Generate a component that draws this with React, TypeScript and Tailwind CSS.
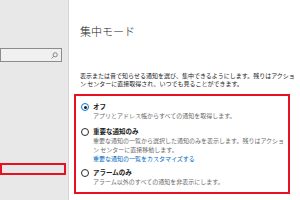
import React from "react";

type Option = {
  id: string;
  title: string;
  lines: string[];
  link?: string;
  selected?: boolean;
  className: string;
};

const OPTIONS: Option[] = [
  {
    id: "off",
    title: "オフ",
    lines: ["アプリとアドレス帳からすべての通知を取得します。"],
    selected: true,
    className: "mt-[6px]",
  },
  {
    id: "priority",
    title: "重要な通知のみ",
    lines: [
      "重要な通知の一覧から選択した通知のみを表示します。残りはアクショ",
      "ン センターに直接移動します。",
    ],
    link: "重要な通知の一覧をカスタマイズする",
    className: "mt-[7px]",
  },
  {
    id: "alarms",
    title: "アラームのみ",
    lines: ["アラーム以外のすべての通知を非表示にします。"],
    className: "mt-[5px]",
  },
];

function Radio({ selected }: { selected?: boolean }) {
  if (selected) {
    return (
      <span className="mt-[1px] flex h-[8px] w-[8px] shrink-0 items-center justify-center rounded-full border-[1.5px] border-[#0078d7]">
        <span className="h-[3px] w-[3px] rounded-full bg-[#1a1a1a]" />
      </span>
    );
  }
  return <span className="mt-[1px] h-[8px] w-[8px] shrink-0 rounded-full border-[1.5px] border-[#2b2b2b]" />;
}

export default function App() {
  return (
    <div className="flex h-[200px] w-[300px] overflow-hidden bg-white font-['Noto_Sans_CJK_JP','Noto_Sans',sans-serif]">
      {/* 左側のナビゲーション */}
      <aside className="flex w-[69px] shrink-0 flex-col border-r border-[#d6d6d6] bg-[#e8e8e8]">
        <div className="mt-[48px] flex h-[14px] w-[62px] items-center justify-end border border-[#8c8c8c] bg-[#f0f0f0] pr-[3px]">
          <svg width="7" height="7" viewBox="0 0 10 10" fill="none" stroke="#7a7a7a" strokeWidth="1.3">
            <circle cx="6" cy="4" r="3" />
            <path d="M3.8 6.2 L0.8 9.2" />
          </svg>
        </div>
        <div className="mt-[101px] h-[12px] w-[66px] border-2 border-[#e81123]" />
      </aside>

      {/* 集中モード設定 */}
      <main className="flex-1 pl-[5px] pt-[26px]">
        <h1 className="pl-[6px] text-[11px] font-light leading-[11px] text-[#1a1a1a]">集中モード</h1>
        <p className="mt-[35px] pl-[6px] text-[6px] leading-[8px] whitespace-nowrap text-[#222]">
          表示または音で知らせる通知を選び、集中できるようにします。残りはアクショ
          <br />
          ン センターに直接取得され、いつでも見ることができます。
        </p>

        <div className="mt-[6px] h-[100px] w-[216px] border-2 border-[#e81123] pl-[5px]">
          {OPTIONS.map((opt) => (
            <div key={opt.id} className={`flex items-start gap-[4px] ${opt.className}`}>
              <Radio selected={opt.selected} />
              <div className="flex flex-col text-[6px] leading-[9px] whitespace-nowrap">
                <span className="text-[6.5px] font-semibold text-[#1a1a1a]">{opt.title}</span>
                {opt.lines.map((line) => (
                  <span key={line} className="text-[#6b6b6b]">
                    {line}
                  </span>
                ))}
                {opt.link && <span className="text-[#0067c0]">{opt.link}</span>}
              </div>
            </div>
          ))}
        </div>
      </main>
    </div>
  );
}
